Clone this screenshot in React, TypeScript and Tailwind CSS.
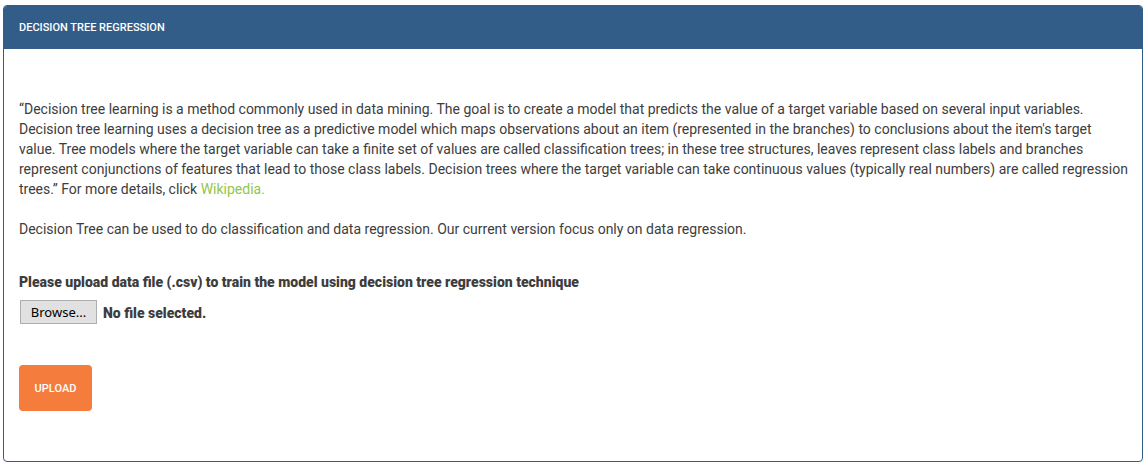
import { useRef, useState } from "react";

export default function App() {
  const inputRef = useRef<HTMLInputElement>(null);
  const [fileName, setFileName] = useState("");

  return (
    <main className="px-[3px] pt-[5px] pb-[3px] font-[Roboto,sans-serif] text-sm leading-5 text-[#3d3d3d]">
      <section className="overflow-hidden rounded-[4px] border border-[#325d88] bg-white">
        <header className="bg-[#325d88] px-[15px] pt-3 pb-[11px]">
          <h1 className="text-[11px] leading-5 font-medium text-white uppercase">Decision Tree Regression</h1>
        </header>
        <div className="py-[50px] pr-[13px] pl-[15px]">
          <p>
            “Decision tree learning is a method commonly used in data mining. The goal is to create a model that
            predicts the value of a target variable based on several input variables. Decision tree learning uses a
            decision tree as a predictive model which maps observations about an item (represented in the branches) to
            conclusions about the item's target value. Tree models where the target variable can take a finite set of
            values are called classification trees; in these tree structures, leaves represent class labels and
            branches represent conjunctions of features that lead to those class labels. Decision trees where the
            target variable can take continuous values (typically real numbers) are called regression trees.” For more
            details, click{" "}
            <a href="https://en.wikipedia.org/wiki/Decision_tree_learning" className="text-[#93c54b]">
              Wikipedia.
            </a>
          </p>
          <p className="mt-5">
            Decision Tree can be used to do classification and data regression. Our current version focus only on data
            regression.
          </p>
          <form className="mt-[33px]" onSubmit={(e) => e.preventDefault()}>
            <label htmlFor="data-file" className="block font-black">
              Please upload data file (.csv) to train the model using decision tree regression technique
            </label>
            <input
              id="data-file"
              ref={inputRef}
              type="file"
              accept=".csv"
              className="hidden"
              onChange={(e) => setFileName(e.target.files?.[0]?.name ?? "")}
            />
            <div className="mt-2 flex items-end gap-1.5 pl-px">
              <button
                type="button"
                onClick={() => inputRef.current?.click()}
                className="h-6 w-[77px] border border-[#adadad] bg-[#e1e1e1] font-['Noto_Sans',sans-serif] text-[13px] leading-5 text-black"
              >
                Browse...
              </button>
              <span className="leading-[22px] font-black">{fileName || "No file selected."}</span>
            </div>
            <button
              type="submit"
              className="mt-[41px] h-[46px] min-w-[73px] rounded-[4px] bg-[#f47c3c] px-[15px] pt-0.5 text-[11px] font-medium text-white uppercase"
            >
              Upload
            </button>
          </form>
        </div>
      </section>
    </main>
  );
}
